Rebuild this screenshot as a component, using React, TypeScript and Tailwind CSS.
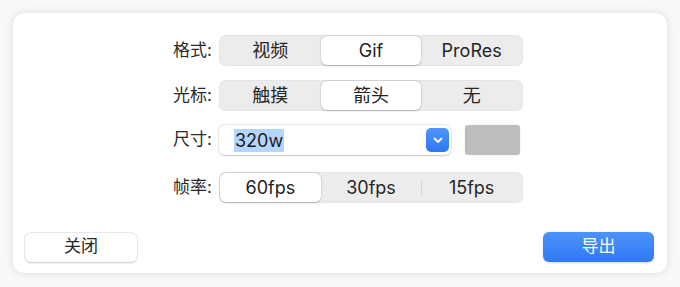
import React from 'react';

const font = { fontFamily: 'Inter, "Noto Sans CJK SC", sans-serif' };

type SegProps = { items: string[]; selected: number };

const Segmented = ({ items, selected }: SegProps) => (
  <div className="grid grid-cols-3 h-[31px] w-[304px] rounded-[7px] bg-[#ececec] p-px shadow-[inset_0_0_0_0.5px_rgba(0,0,0,0.06)]">
    {items.map((item, i) => {
      const active = i === selected;
      // divider only between two unselected neighbours
      const divider = i > 0 && i !== selected && i - 1 !== selected;
      return (
        <div key={item} className="relative flex items-center justify-center">
          {divider && <div className="absolute left-0 top-[8px] h-[14px] w-px bg-[#d4d4d4]" />}
          <div
            className={
              active
                ? 'flex h-full w-full items-center justify-center rounded-[6px] bg-white text-[#222] shadow-[0_0.5px_2px_rgba(0,0,0,0.22),0_0_0_0.5px_rgba(0,0,0,0.06)]'
                : 'flex h-full w-full items-center justify-center text-[#262626]'
            }
          >
            {item}
          </div>
        </div>
      );
    })}
  </div>
);

const Row = ({ label, children }: { label: string; children: React.ReactNode }) => (
  <div className="flex items-center">
    <div className="w-[40px] whitespace-nowrap text-right text-[17px] text-[#2a2a2a]">{label}</div>
    <div className="ml-[7px] flex items-center">{children}</div>
  </div>
);

export default function App() {
  return (
    <div className="h-[287px] w-[680px] bg-[#f8f8f8] p-[13px] text-[18px]" style={font}>
      <div className="flex h-[260px] w-[654px] flex-col rounded-[12px] bg-white shadow-[0_0_8px_rgba(0,0,0,0.12)]">
        <div className="flex flex-col pl-[159px] pt-[22px]">
          <Row label="格式:">
            <Segmented items={['视频', 'Gif', 'ProRes']} selected={1} />
          </Row>
          <div className="mt-[14px]">
            <Row label="光标:">
              <Segmented items={['触摸', '箭头', '无']} selected={1} />
            </Row>
          </div>
          <div className="mt-[14px]">
            <Row label="尺寸:">
              <div className="flex h-[30px] w-[232px] items-center justify-between rounded-[6px] bg-white pl-[15px] pr-[2px] shadow-[0_0.5px_2px_rgba(0,0,0,0.2),0_0_0_0.5px_rgba(0,0,0,0.08)]">
                <span className="bg-[#b4d6fd] px-[1px] leading-[23px] text-[#1a1a1a]">320w</span>
                <div className="flex h-[24px] w-[23px] items-center justify-center rounded-[5px] bg-gradient-to-b from-[#4f95fb] to-[#2b78f3]">
                  <svg width="10" height="7" viewBox="0 0 10 7">
                    <path d="M1.5 1.5 L5 5 L8.5 1.5" fill="none" stroke="white" strokeWidth="1.8" strokeLinecap="round" strokeLinejoin="round" />
                  </svg>
                </div>
              </div>
              <div className="ml-[14px] h-[30px] w-[55px] rounded-[3px] bg-[#bdbdbd] shadow-[0_0_0_0.5px_rgba(0,0,0,0.06)]" />
            </Row>
          </div>
          <div className="mt-[17px]">
            <Row label="帧率:">
              <Segmented items={['60fps', '30fps', '15fps']} selected={0} />
            </Row>
          </div>
        </div>
        <div className="mt-auto flex items-center justify-between pb-[11px] pl-[12px] pr-[13px]">
          <button className="flex h-[29px] w-[112px] items-center justify-center rounded-[6px] bg-white text-[17px] text-[#262626] shadow-[0_0.5px_2px_rgba(0,0,0,0.2),0_0_0_0.5px_rgba(0,0,0,0.08)]">
            关闭
          </button>
          <button className="flex h-[30px] w-[111px] items-center justify-center rounded-[6px] bg-gradient-to-b from-[#4c92f8] to-[#2f79f3] text-[17px] text-white shadow-[0_0.5px_2px_rgba(0,0,0,0.15)]">
            导出
          </button>
        </div>
      </div>
    </div>
  );
}
